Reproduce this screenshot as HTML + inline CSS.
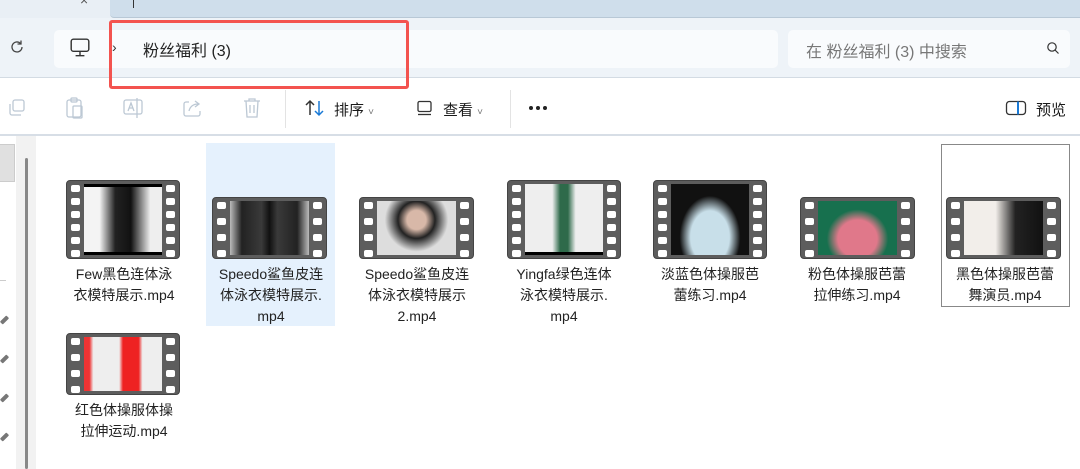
<!DOCTYPE html>
<html><head><meta charset="utf-8"><style>
*{margin:0;padding:0;box-sizing:border-box}
body{width:1080px;height:469px;overflow:hidden;background:#fff;font-family:"Liberation Sans","Noto Sans CJK SC",sans-serif;position:relative;color:#1a1a1a}
.abs{position:absolute}
.film{position:absolute;background:#5d5d5d;border-radius:4px;border:1px solid #444}
.film .h{position:absolute;width:9px;height:7px;background:#fff;border-radius:2px}
.film .img{position:absolute;top:3px;bottom:3px;left:17px;right:17px}
.lbl{position:absolute;width:130px;text-align:center;font-size:14px;line-height:21px;color:#222}
.pin{position:absolute;left:0;width:9px;height:4px;background:#777;transform:rotate(-45deg);border-radius:1px}
</style></head><body>
<div class="abs" style="left:0;top:0;width:1080px;height:18px;background:#e9eff5"></div>
<div class="abs" style="left:110px;top:0;width:970px;height:18px;background:#cfdeeb;border-bottom:1px solid #b8c8d6;border-radius:0 0 0 4px"></div>
<div class="abs" style="left:80px;top:-8px;font-size:14px;color:#555">×</div>
<div class="abs" style="left:133px;top:0;width:1px;height:8px;background:#333"></div>
<div class="abs" style="left:0;top:18px;width:1080px;height:60px;background:#eef3f8;border-bottom:1px solid #d3dbe3"></div>
<svg class="abs" style="left:9px;top:39px" width="16" height="16" viewBox="0 0 16 16"><path d="M13 8a5 5 0 1 1-1.6-3.7M12 1.5v3.5h-3.5" fill="none" stroke="#444" stroke-width="1.3"/></svg>
<div class="abs" style="left:54px;top:30px;width:724px;height:38px;background:#f9fbfd;border-radius:5px"></div>
<svg class="abs" style="left:69px;top:37px" width="22" height="22" viewBox="0 0 20 20"><rect x="2" y="2" width="16" height="11" rx="2" fill="none" stroke="#333" stroke-width="1.3"/><path d="M6 17h8M10 13v4" stroke="#333" stroke-width="1.3"/></svg>
<div class="abs" style="left:112px;top:39px;font-size:14px;color:#333">›</div>
<div class="abs" style="left:143px;top:37px;font-size:16px;color:#222">粉丝福利 (3)</div>
<div class="abs" style="left:788px;top:30px;width:282px;height:38px;background:#f9fbfd;border-radius:5px"></div>
<div class="abs" style="left:806px;top:38px;font-size:16px;color:#777">在 粉丝福利 (3) 中搜索</div>
<svg class="abs" style="left:1046px;top:41px" width="14" height="14" viewBox="0 0 14 14"><circle cx="6" cy="6" r="4.2" fill="none" stroke="#333" stroke-width="1.2"/><path d="M9 9l3.5 3.5" stroke="#333" stroke-width="1.2"/></svg>
<div class="abs" style="left:109px;top:20px;width:300px;height:69px;border:3px solid #f3534f;border-radius:3px"></div>
<div class="abs" style="left:0;top:134px;width:1080px;height:2px;background:#d7dee6"></div>
<svg class="abs" style="left:6px;top:97px" width="22" height="22" viewBox="0 0 22 22" fill="none" stroke="#bcc8d4" stroke-width="1.3"><rect x="7" y="3" width="11" height="11" rx="2"/><path d="M4 7v9a2 2 0 0 0 2 2h9"/></svg>
<svg class="abs" style="left:64px;top:96px" width="22" height="24" viewBox="0 0 22 24" fill="none" stroke="#bcc8d4" stroke-width="1.3"><rect x="3" y="4" width="14" height="17" rx="2"/><rect x="7" y="2" width="6" height="4" rx="1"/><rect x="9" y="10" width="9" height="12" rx="1"/></svg>
<svg class="abs" style="left:122px;top:96px" width="22" height="24" viewBox="0 0 22 24" fill="none" stroke="#bcc8d4" stroke-width="1.3"><rect x="2" y="4" width="18" height="14" rx="2"/><path d="M6 15l3-8 3 8M7 12h4M15 2v20"/></svg>
<svg class="abs" style="left:181px;top:97px" width="22" height="22" viewBox="0 0 22 22" fill="none" stroke="#bcc8d4" stroke-width="1.3"><path d="M8 5H5a2 2 0 0 0-2 2v10a2 2 0 0 0 2 2h12a2 2 0 0 0 2-2v-3M8 14c1-5 5-7 9-7M14 4l4 3-4 3"/></svg>
<svg class="abs" style="left:241px;top:96px" width="22" height="24" viewBox="0 0 22 24" fill="none" stroke="#bcc8d4" stroke-width="1.3"><path d="M3 5h16M8 5V3h6v2M5 5l1 16h10l1-16M9 9v8M13 9v8"/></svg>
<div class="abs" style="left:285px;top:90px;width:1px;height:38px;background:#e3e3e3"></div>
<svg class="abs" style="left:304px;top:98px" width="22" height="20" viewBox="0 0 22 20" fill="none" stroke-width="1.5"><path d="M6 17V3M2 7l4-4 4 4" stroke="#333"/><path d="M15 3v14M11 13l4 4 4-4" stroke="#1a7ad6"/></svg>
<div class="abs" style="left:334px;top:99px;font-size:15px">排序 <span style="font-size:10px;color:#777">˅</span></div>
<svg class="abs" style="left:416px;top:100px" width="18" height="16" viewBox="0 0 18 16" fill="none" stroke="#333" stroke-width="1.3"><rect x="2" y="1.5" width="13" height="10" rx="1.5"/><path d="M2 14.5h13"/></svg>
<div class="abs" style="left:443px;top:99px;font-size:15px">查看 <span style="font-size:10px;color:#777">˅</span></div>
<div class="abs" style="left:510px;top:90px;width:1px;height:38px;background:#e3e3e3"></div>
<div class="abs" style="left:529px;top:106px;width:4px;height:4px;border-radius:2px;background:#222;box-shadow:7px 0 #222,14px 0 #222"></div>
<svg class="abs" style="left:1005px;top:100px" width="22" height="16" viewBox="0 0 22 16" fill="none" stroke-width="1.3"><rect x="1.5" y="1.5" width="19" height="13" rx="3" stroke="#333"/><path d="M13 1.5v13" stroke="#1a7ad6" stroke-width="2"/></svg>
<div class="abs" style="left:1036px;top:99px;font-size:15px">预览</div>
<div class="abs" style="left:0;top:144px;width:15px;height:38px;background:#e0e0e0;border:1px solid #ccc;border-left:none"></div>
<div class="abs" style="left:0;top:280px;width:6px;height:1px;background:#ccc"></div>
<div class="pin" style="top:318px"></div><div class="pin" style="top:357px"></div><div class="pin" style="top:396px"></div><div class="pin" style="top:435px"></div>
<div class="abs" style="left:16px;top:136px;width:20px;height:333px;background:#f2f2f2"></div>
<div class="abs" style="left:25px;top:158px;width:3px;height:311px;background:#888;border-radius:2px"></div>
<div class="abs" style="left:206px;top:143px;width:129px;height:183px;background:#e5f1fd"></div>
<div class="abs" style="left:941px;top:144px;width:129px;height:163px;border:1px solid #888"></div>
<div class="film" style="left:66px;top:180px;width:114px;height:79px"><div class="img" style="background:linear-gradient(90deg,#f4f4f4 20%,#222 40%,#111 60%,#eee 85%);border-top:3px solid #000;border-bottom:3px solid #000"></div></div>
<div class="film" style="left:212px;top:197px;width:115px;height:62px"><div class="img" style="background:linear-gradient(90deg,#bbb,#222 15%,#3a3a3a 40%,#111 50%,#3a3a3a 60%,#222 85%,#bbb)"></div></div>
<div class="film" style="left:359px;top:197px;width:115px;height:62px"><div class="img" style="background:radial-gradient(circle at 50% 35%,#d8b8a8 18%,#222 35%,#ddd 60%)"></div></div>
<div class="film" style="left:507px;top:180px;width:114px;height:79px"><div class="img" style="background:linear-gradient(90deg,#eee 35%,#2e6a4a 45%,#2e6a4a 55%,#eee 65%);border-bottom:3px solid #000"></div></div>
<div class="film" style="left:653px;top:180px;width:114px;height:79px"><div class="img" style="background:radial-gradient(ellipse at 50% 75%,#c8dfe9 35%,#111 55%)"></div></div>
<div class="film" style="left:800px;top:197px;width:115px;height:62px"><div class="img" style="background:radial-gradient(ellipse at 50% 70%,#e0788a 35%,#17704e 55%)"></div></div>
<div class="film" style="left:946px;top:197px;width:115px;height:62px"><div class="img" style="background:linear-gradient(90deg,#f2eeea 40%,#222 65%,#111)"></div></div>
<div class="film" style="left:66px;top:333px;width:114px;height:62px"><div class="img" style="background:linear-gradient(90deg,#e33 0 7%,#eee 12%,#eee 45%,#e22 50%,#e22 70%,#eee 75%)"></div></div>
<div class="lbl" style="left:59px;top:264px">Few黑色连体泳<br>衣模特展示.mp4</div>
<div class="lbl" style="left:206px;top:264px">Speedo鲨鱼皮连<br>体泳衣模特展示.<br>mp4</div>
<div class="lbl" style="left:352px;top:264px">Speedo鲨鱼皮连<br>体泳衣模特展示<br>2.mp4</div>
<div class="lbl" style="left:499px;top:264px">Yingfa绿色连体<br>泳衣模特展示.<br>mp4</div>
<div class="lbl" style="left:645px;top:264px">淡蓝色体操服芭<br>蕾练习.mp4</div>
<div class="lbl" style="left:792px;top:264px">粉色体操服芭蕾<br>拉伸练习.mp4</div>
<div class="lbl" style="left:940px;top:264px">黑色体操服芭蕾<br>舞演员.mp4</div>
<div class="lbl" style="left:59px;top:400px">红色体操服体操<br>拉伸运动.mp4</div>
<script>
document.querySelectorAll('.film').forEach(f=>{const h=f.offsetHeight;const n=Math.max(4,Math.round((h-6)/13));for(let i=0;i<n;i++){for(const s of['left','right']){const d=document.createElement('div');d.className='h';d.style[s]='4px';d.style.top=(4+i*(h-14)/(n-1))+'px';f.appendChild(d);}}});
</script>
</body></html>
